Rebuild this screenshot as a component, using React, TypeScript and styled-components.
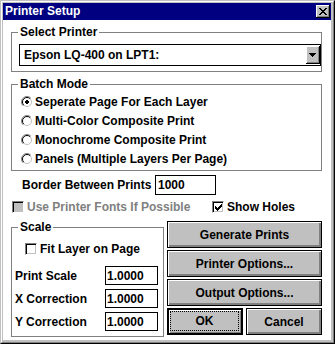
import React from "react";
import styled, { createGlobalStyle } from "styled-components";

const GlobalStyle = createGlobalStyle`
  html, body { margin: 0; padding: 0; background: #fff; }
  body {
    font-family: "Liberation Sans", Arial, sans-serif;
    font-size: 12px;
    font-weight: bold;
    color: #000;
  }
  * { box-sizing: border-box; }
`;

const Window = styled.div`
  width: 335px;
  height: 344px;
  border: 1px solid;
  border-color: #c0c0c0 #000 #000 #c0c0c0;
  background: #c0c0c0;
`;

const Frame = styled.div`
  height: 100%;
  border: 1px solid;
  border-color: #fff #808080 #808080 #fff;
  padding: 1px 2px 2px 1px;
  display: flex;
  flex-direction: column;
`;

const TitleBar = styled.div`
  height: 17px;
  flex: none;
  background: #000080;
  color: #fff;
  display: flex;
  align-items: center;
  justify-content: space-between;
  padding: 0 1px 0 2px;
`;

const TitleText = styled.span`
  line-height: 17px;
`;

const CloseButton = styled.div`
  width: 14px;
  height: 13px;
  background: #c0c0c0;
  box-shadow: inset -1px -1px #000, inset 1px 1px #fff, inset -2px -2px #808080;
  display: flex;
  align-items: center;
  justify-content: center;
  padding: 0 1px 1px 0;
`;

const Body = styled.div`
  flex: 1;
  background: #fff;
  display: flex;
  flex-direction: column;
  padding: 0 9px 0 8px;
`;

const Group = styled.div<{ $mt: number; $pad: string; $w?: number }>`
  position: relative;
  margin-top: ${(p) => p.$mt}px;
  border: 1px solid #808080;
  padding: ${(p) => p.$pad};
  ${(p) => (p.$w ? `width: ${p.$w}px; flex: none;` : "")}
  display: flex;
  flex-direction: column;
`;

const Legend = styled.span`
  position: absolute;
  top: -8px;
  left: 6px;
  padding: 0 2px;
  line-height: 14px;
  background: #fff;
`;

const Combo = styled.div`
  height: 22px;
  border: 1px solid #000;
  display: flex;
  align-items: center;
  padding: 1px 0 1px 4px;
`;

const ComboText = styled.span`
  flex: 1;
  line-height: 14px;
`;

const DropButton = styled.div`
  width: 14px;
  height: 18px;
  background: #c0c0c0;
  box-shadow: inset -1px -1px #000, inset 1px 1px #fff, inset -2px -2px #808080;
  display: flex;
  align-items: center;
  justify-content: center;
  padding: 0 1px 1px 0;
`;

const RadioRow = styled.div`
  height: 19px;
  display: flex;
  align-items: center;
  gap: 2px;
`;

const FieldRow = styled.div`
  margin-top: 4px;
  display: flex;
  align-items: center;
  padding-left: 11px;
`;

const FieldLabel = styled.span<{ $w: number }>`
  width: ${(p) => p.$w}px;
  flex: none;
`;

const TextBox = styled.div<{ $w: number; $h: number }>`
  width: ${(p) => p.$w}px;
  height: ${(p) => p.$h}px;
  flex: none;
  border: 1px solid #000;
  background: #fff;
  padding-left: ${(p) => (p.$w > 55 ? 2 : 1)}px;
  display: flex;
  align-items: center;
`;

const CheckRow = styled.div<{ $mt: number; $pl: number }>`
  margin-top: ${(p) => p.$mt}px;
  padding-left: ${(p) => p.$pl}px;
  height: 12px;
  display: flex;
  align-items: center;
`;

const CheckItem = styled.div<{ $w?: number }>`
  display: flex;
  align-items: center;
  gap: 3px;
  ${(p) => (p.$w ? `width: ${p.$w}px;` : "")}
`;

const CheckBox = styled.span<{ $disabled?: boolean }>`
  width: 12px;
  height: 12px;
  flex: none;
  border: 1px solid;
  border-color: #808080 #fff #fff #808080;
  box-shadow: inset 1px 1px #000, inset -1px -1px #c0c0c0;
  background: ${(p) => (p.$disabled ? "#c0c0c0" : "#fff")};
  display: flex;
  align-items: center;
  justify-content: center;
`;

const CheckLabel = styled.span<{ $disabled?: boolean }>`
  color: ${(p) => (p.$disabled ? "#808080" : "#000")};
  line-height: 14px;
`;

const Bottom = styled.div`
  margin-top: 8px;
  display: flex;
  align-items: flex-start;
`;

const ScaleRow = styled.div<{ $mt: number }>`
  margin-top: ${(p) => p.$mt}px;
  display: flex;
  align-items: center;
  justify-content: space-between;
`;

const ButtonColumn = styled.div`
  margin-left: 3px;
  width: 155px;
  display: flex;
  flex-direction: column;
  gap: 2px;
`;

const ButtonPair = styled.div`
  display: flex;
  gap: 3px;
`;

const Button = styled.div<{ $default?: boolean }>`
  height: 27px;
  min-height: 27px;
  max-height: 27px;
  flex: 1 1 0;
  background: #c0c0c0;
  border: 1px solid #000;
  box-shadow: ${(p) =>
    p.$default
      ? "inset 0 0 0 1px #000, inset 2px 2px #fff, inset -2px -2px #808080"
      : "inset 1px 1px #fff, inset -1px -1px #808080, inset -2px -2px #808080"};
  display: flex;
  align-items: center;
  justify-content: center;
  line-height: 14px;
`;

const FocusRing = styled.span`
  align-self: stretch;
  flex: 1;
  margin: 2px 3px 3px 2px;
  border: 1px dotted #000;
  display: flex;
  align-items: center;
  justify-content: center;
`;

const Radio = ({ on }: { on?: boolean }) => (
  <svg width="12" height="12" viewBox="0 0 12 12" style={{ flex: "none" }}>
    <circle cx="6" cy="6" r="5" fill="#fff" />
    <path d="M9.9 2.1 A5.5 5.5 0 0 0 2.1 9.9" fill="none" stroke="#808080" strokeWidth="1" />
    <path d="M9.2 2.8 A4.5 4.5 0 0 0 2.8 9.2" fill="none" stroke="#000" strokeWidth="1" />
    <path d="M9.2 2.8 A4.5 4.5 0 0 1 2.8 9.2" fill="none" stroke="#c0c0c0" strokeWidth="1" />
    {on && <path d="M5 4h2v1h1v2h-1v1h-2v-1h-1v-2h1z" fill="#000" />}
  </svg>
);

const CheckMark = () => (
  <svg width="7" height="7" viewBox="0 0 7 7" shapeRendering="crispEdges">
    <path
      d="M6 0h1v3h-1zM5 1h1v3h-1zM4 2h1v3h-1zM0 2h1v3h-1zM1 3h1v3h-1zM2 4h1v3h-1zM3 3h1v3h-1z"
      fill="#000"
    />
  </svg>
);

const CloseGlyph = () => (
  <svg width="8" height="7" viewBox="0 0 8 7" shapeRendering="crispEdges">
    <path
      d="M0 0h2v1h-2zM6 0h2v1h-2zM1 1h2v1h-2zM5 1h2v1h-2zM2 2h4v1h-4zM3 3h2v1h-2zM2 4h4v1h-4zM1 5h2v1h-2zM5 5h2v1h-2zM0 6h2v1h-2zM6 6h2v1h-2z"
      fill="#000"
    />
  </svg>
);

const DownArrow = () => (
  <svg width="7" height="4" viewBox="0 0 7 4" shapeRendering="crispEdges">
    <path d="M0 0h7v1H0zM1 1h5v1H1zM2 2h3v1H2zM3 3h1v1H3z" fill="#000" />
  </svg>
);

const modes = [
  "Seperate Page For Each Layer",
  "Multi-Color Composite Print",
  "Monochrome Composite Print",
  "Panels (Multiple Layers Per Page)",
];

const scaleFields = [
  { label: "Print Scale", value: "1.0000" },
  { label: "X Correction", value: "1.0000" },
  { label: "Y Correction", value: "1.0000" },
];

export default function App() {
  return (
    <>
      <GlobalStyle />
      <Window>
        <Frame>
          <TitleBar>
            <TitleText>Printer Setup</TitleText>
            <CloseButton>
              <CloseGlyph />
            </CloseButton>
          </TitleBar>
          <Body>
            <Group $mt={12} $pad="11px 0 5px 7px">
              <Legend>Select Printer</Legend>
              <Combo>
                <ComboText>Epson LQ-400 on LPT1:</ComboText>
                <DropButton>
                  <DownArrow />
                </DropButton>
              </Combo>
            </Group>

            <Group $mt={12} $pad="7px 0 2px 9px">
              <Legend>Batch Mode</Legend>
              {modes.map((m, i) => (
                <RadioRow key={m}>
                  <Radio on={i === 0} />
                  <span>{m}</span>
                </RadioRow>
              ))}
            </Group>

            <FieldRow>
              <FieldLabel $w={133}>Border Between Prints</FieldLabel>
              <TextBox $w={61} $h={20}>1000</TextBox>
            </FieldRow>

            <CheckRow $mt={6} $pl={1}>
              <CheckItem $w={200}>
                <CheckBox $disabled />
                <CheckLabel $disabled>Use Printer Fonts If Possible</CheckLabel>
              </CheckItem>
              <CheckItem>
                <CheckBox>
                  <CheckMark />
                </CheckBox>
                <CheckLabel>Show Holes</CheckLabel>
              </CheckItem>
            </CheckRow>

            <Bottom>
              <Group $mt={6} $pad="15px 5px 5px 3px" $w={153}>
                <Legend>Scale</Legend>
                <CheckRow $mt={0} $pl={10}>
                  <CheckItem>
                    <CheckBox />
                    <CheckLabel>Fit Layer on Page</CheckLabel>
                  </CheckItem>
                </CheckRow>
                {scaleFields.map((f, i) => (
                  <ScaleRow key={f.label} $mt={i === 0 ? 11 : 4}>
                    <span>{f.label}</span>
                    <TextBox $w={53} $h={19}>{f.value}</TextBox>
                  </ScaleRow>
                ))}
              </Group>

              <ButtonColumn>
                <Button>Generate Prints</Button>
                <Button>Printer Options...</Button>
                <Button>Output Options...</Button>
                <ButtonPair>
                  <Button $default>
                    <FocusRing>OK</FocusRing>
                  </Button>
                  <Button>Cancel</Button>
                </ButtonPair>
              </ButtonColumn>
            </Bottom>
          </Body>
        </Frame>
      </Window>
    </>
  );
}
